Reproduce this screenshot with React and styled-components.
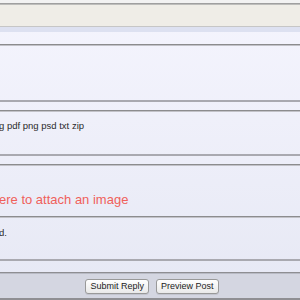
import React from 'react';
import styled, { createGlobalStyle } from 'styled-components';

const Global = createGlobalStyle`
  html, body {
    margin: 0;
    padding: 0;
    background: #f2f2f2;
  }
  body {
    width: 300px;
    height: 300px;
    overflow: hidden;
    font-family: 'Liberation Sans', Arial, sans-serif;
  }
`;

const Page = styled.div`
  width: 300px;
  height: 300px;
  display: flex;
  flex-direction: column;
  overflow: hidden;
  background: linear-gradient(#f5f5fe, #e6e8f4);
`;

const TopGap = styled.div`
  height: 3px;
  flex-shrink: 0;
  background: #f2f2f2;
`;

const Header = styled.div`
  height: 22px;
  flex-shrink: 0;
  background: #efede7;
  border-top: 1px solid #9f9f9f;
  box-shadow: inset 0 1px 0 #bdbdbb;
  border-bottom: 1px solid #c6c6c6;
`;

const Band = styled.div`
  height: 5px;
  flex-shrink: 0;
  background: #dde1f1;
`;

const Spacer = styled.div`
  height: ${p => p.$h}px;
  flex-shrink: 0;
`;

const Field = styled.div`
  height: ${p => p.$h}px;
  flex-shrink: 0;
  border-top: 1px solid #8c8c8e;
  box-shadow: inset 0 1px 0 #c2c2c8;
  border-bottom: ${p => (p.$open ? '0' : '2px solid #a9a9b0')};
  padding: ${p => p.$pad || '0'};
  box-sizing: content-box;
  color: #2a2a2a;
`;

const Note = styled.div`
  font-size: 9.5px;
  line-height: 12px;
  margin-left: -1px;
  white-space: nowrap;
`;

const AttachLink = styled.div`
  font-size: 13px;
  line-height: 16px;
  color: #f0605a;
  margin-left: -1px;
  white-space: nowrap;
`;

const ButtonBar = styled.div`
  height: 28px;
  flex-shrink: 0;
  background: #d4d6e1;
  border-top: 1px solid #8e8e92;
  box-shadow: inset 0 1px 0 #b8bac4;
  border-bottom: 2px solid #8f8f93;
  display: flex;
  justify-content: center;
  align-items: flex-start;
  gap: 7px;
  padding-top: 6px;
  padding-left: 4px;
  box-sizing: border-box;
`;

const Button = styled.button`
  height: 15px;
  padding: 0 4px;
  border: 1px solid #999;
  border-radius: 3px;
  background: linear-gradient(#ffffff, #e9e9e9);
  box-shadow: 0 1px 0 rgba(0, 0, 0, 0.08);
  font-family: 'Liberation Sans', Arial, sans-serif;
  font-size: 9px;
  line-height: 13px;
  color: #222;
`;

export default function App() {
  return (
    <Page>
      <Global />
      <TopGap />
      <Header />
      <Band />
      <Spacer $h={12} />
      <Field $h={55} />
      <Spacer $h={8} />
      <Field $h={34} $pad="9px 0 0 0">
        <Note>g pdf png psd txt zip</Note>
      </Field>
      <Spacer $h={8} />
      <Field $h={24} $pad="27px 0 0 0" $open>
        <AttachLink>ere to attach an image</AttachLink>
      </Field>
      <Field $h={32} $pad="10px 0 0 0">
        <Note>d.</Note>
      </Field>
      <Spacer $h={11} />
      <ButtonBar>
        <Button>Submit Reply</Button>
        <Button>Preview Post</Button>
      </ButtonBar>
    </Page>
  );
}
